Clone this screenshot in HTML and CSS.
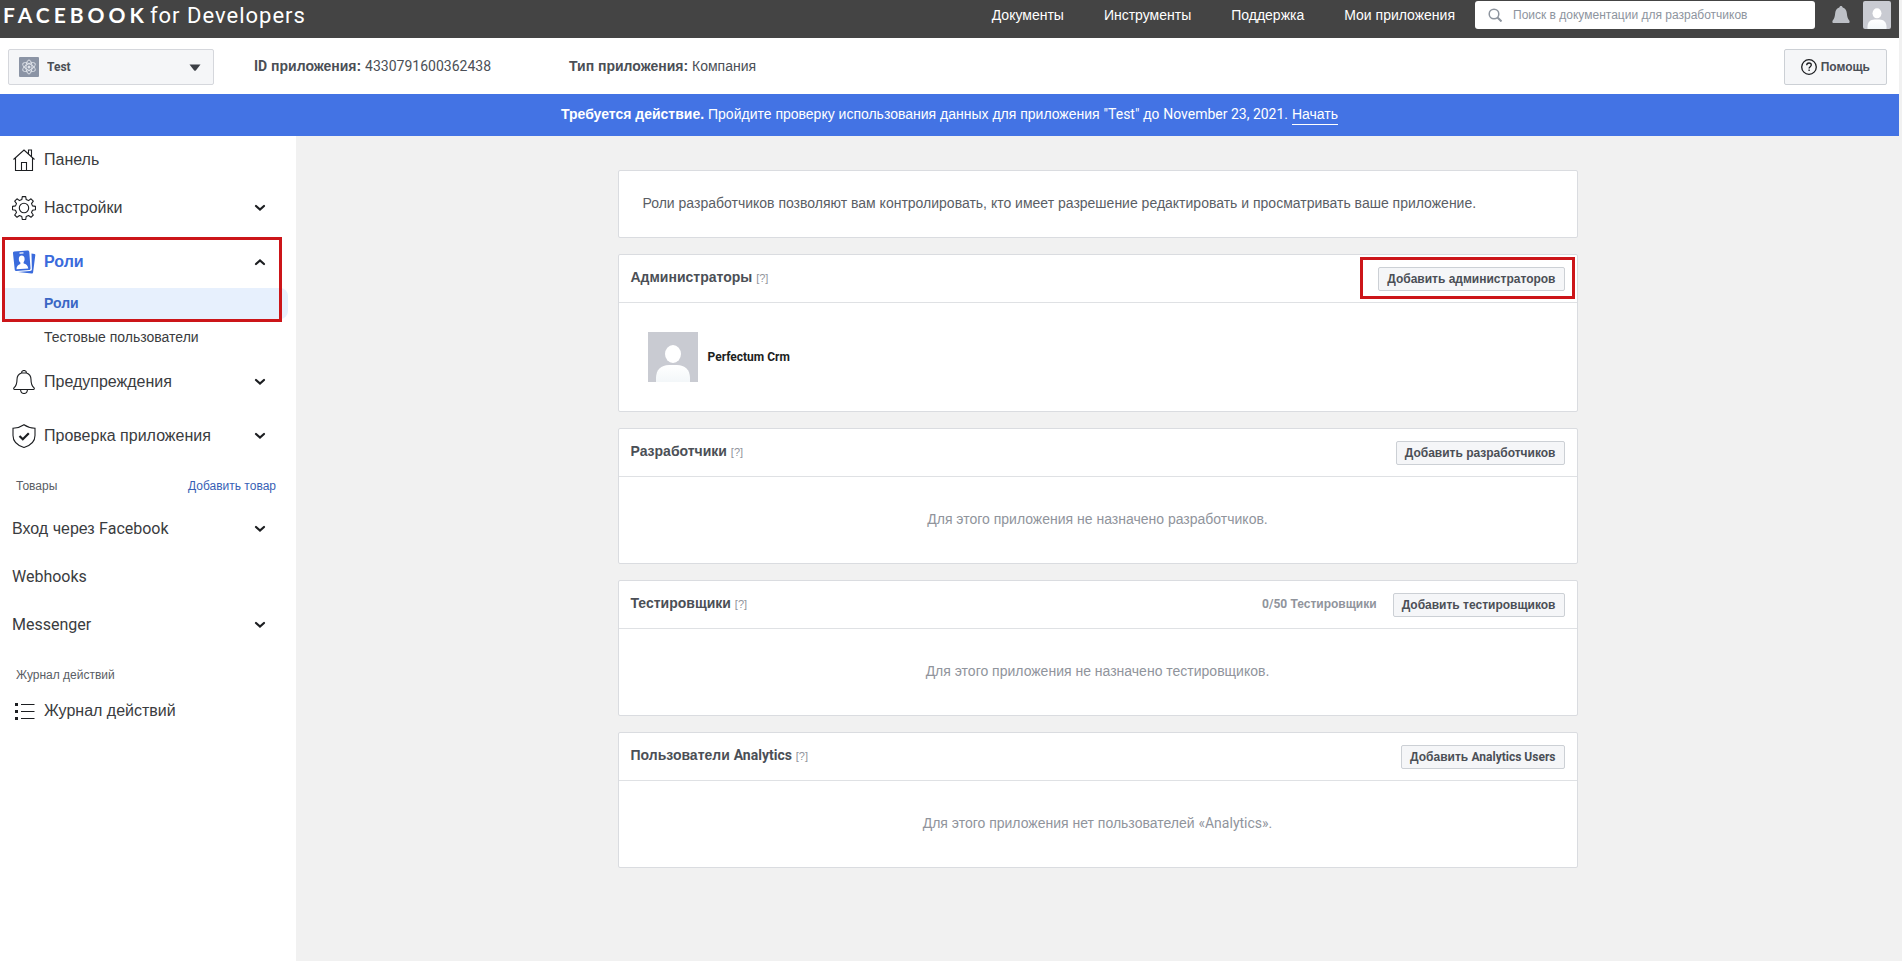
FILE: index.html
```html
<!DOCTYPE html>
<html lang="ru">
<head>
<meta charset="utf-8">
<title>Роли - Test - Facebook for Developers</title>
<link rel="stylesheet" href="styles.css">
</head>
<body>
<svg class="defs" aria-hidden="true">
  <symbol id="chevron" viewBox="0 0 12 8"><path d="M2 2l4 3.6L10 2" fill="none" stroke="#1c1e21" stroke-width="2.2" stroke-linecap="round"/></symbol>
  <symbol id="person" viewBox="0 0 50 50">
    <linearGradient id="shade" x1="0" y1="0" x2="0" y2="1"><stop offset="0" stop-color="#fff"/><stop offset="1" stop-color="#f3f7f9"/></linearGradient>
    <rect width="50" height="50" fill="#c9cbd2"/>
    <ellipse cx="25" cy="22" rx="8" ry="9" fill="#fff"/>
    <path d="M8 50v-4c0-8 5-13 13-13h8c8 0 13 5 13 13v4z" fill="url(#shade)"/>
  </symbol>
</svg>

<header class="topbar">
  <a class="brand" href="#"><span class="brand-name">FACEBOOK</span><span class="brand-suffix">for Developers</span></a>
  <nav class="topnav">
    <a href="#">Документы</a>
    <a href="#">Инструменты</a>
    <a href="#">Поддержка</a>
    <a href="#">Мои приложения</a>
  </nav>
  <label class="search">
    <svg width="14" height="14" viewBox="0 0 14 14"><circle cx="6" cy="6" r="4.8" fill="none" stroke="#8d949e" stroke-width="1.5"/><path d="M9.5 9.5l4 4" stroke="#8d949e" stroke-width="2"/></svg>
    <input type="search" aria-label="Поиск" placeholder="Поиск в документации для разработчиков">
  </label>
  <button class="icon-button" type="button" aria-label="Уведомления">
    <svg width="18" height="18" viewBox="0 0 18 18"><path d="M9 0c1 0 1.500.7 1.700 1.600C13.200 2.400 14.500 4.500 14.800 7c.3 3 .8 5.500 2.500 7.500.5.600.5 2.500-.5 2.500H1.200c-1 0-1-1.900-.5-2.500C2.400 12.500 2.900 10 3.200 7c.3-2.500 1.600-4.600 4.100-5.400C7.500.7 8 0 9 0z" fill="#bdc0c6"/></svg>
  </button>
  <button class="icon-button" type="button" aria-label="Профиль"><svg class="profile" width="28" height="28"><use href="#person"/></svg></button>
</header>

<div class="appbar">
  <div class="app-select">
    <svg class="app-icon" width="20" height="20" viewBox="0 0 20 20"><rect width="20" height="20" rx="1" fill="#8b94a5"/><g fill="none" stroke="#dfe3ea" stroke-width="1"><ellipse cx="10" cy="10" rx="3" ry="7"/><ellipse cx="10" cy="10" rx="3" ry="7" transform="rotate(60 10 10)"/><ellipse cx="10" cy="10" rx="3" ry="7" transform="rotate(120 10 10)"/></g><circle cx="10" cy="10" r="1.500" fill="#dfe3ea"/></svg>
    <select aria-label="Приложение"><option>Test</option></select>
    <svg class="app-caret" width="12" height="7" viewBox="0 0 12 7"><path d="M.5.5h11L7 6.200Q6 7.200 5 6.200z" fill="#3c3f45"/></svg>
  </div>
  <p class="app-id"><b><span class="latin">ID</span> приложения:</b> <span class="latin">4330791600362438</span></p>
  <p class="app-type"><b>Тип приложения:</b> Компания</p>
  <button class="help" type="button">
    <svg width="16" height="16" viewBox="0 0 16 16" fill="none" stroke="#1c1e21" stroke-width="1.300"><circle cx="8" cy="8" r="7.300"/><path d="M5.700 6.300c0-1.500 1-2.300 2.300-2.300s2.300.8 2.300 2c0 1.600-2.200 1.700-2.200 3.400"/><path d="M8.100 10.600v1.500"/></svg>
    Помощь
  </button>
</div>

<div class="notice"><b>Требуется действие.</b> Пройдите проверку использования данных для приложения <span class="latin">"Test"</span> до <span class="latin">November 23, 2021.</span> <a href="#">Начать</a></div>

<div class="layout">
  <nav class="sidebar">
    <a class="item" href="#">
      <svg class="icon" viewBox="0 0 24 24"><path d="M1.500 11.500L12 2l10.500 9.500M3.500 10v12.500h17V10M16.500 6V2h3v6.700M9.500 22.500v-8h5v8"/></svg>
      <span>Панель</span>
    </a>
    <button class="item" type="button">
      <svg class="icon" viewBox="0 0 24 24"><circle cx="12" cy="12" r="4.700"/><path d="M10.300.6h3.400l.5 3 2.300 1 2.500-1.800 2.300 2.300-1.800 2.500 1 2.300 3 .5v3.300l-3 .5-1 2.300 1.800 2.500-2.300 2.300-2.500-1.800-2.300 1-.5 3h-3.400l-.5-3-2.300-1L5 21.300 2.700 19l1.800-2.500-1-2.300-3-.5v-3.300l3-.5 1-2.300L2.700 5.100 5 2.800l2.500 1.800 2.300-1z" stroke-linejoin="round"/></svg>
      <span>Настройки</span>
      <svg class="chevron"><use href="#chevron"/></svg>
    </button>
    <div class="group">
      <div class="marked">
        <button class="item item-active" type="button">
          <svg class="icon-solid" viewBox="0 0 24 24"><path d="M19.500 3.500l3 .5c.6.100.9.600.8 1.200l-2.200 17c-.1.900-.7 1.300-1.500 1.200L6 22l12-.9c1.300-.1 2-.8 1.900-2z" fill="#3a6bdc"/><path d="M2.200 1.500L15.500.6c1-.1 1.700.5 1.800 1.500l1.200 16.200c.1 1-.5 1.700-1.500 1.800l-12.500.9c-1 .1-1.700-.5-1.800-1.500L1 3.300c-.1-1 .2-1.700 1.200-1.800z" fill="#3a6bdc"/><path d="M7.500 3.200l4-.3" stroke="#fff" stroke-width="1.200"/><g fill="#fff"><ellipse cx="9.700" cy="9" rx="2.900" ry="3.500"/><path d="M8.200 11h3.200l.3 2.600c2.400.4 4.200 2 4.600 4.900L4.500 19.300c0-3 1.600-4.800 3.900-5.400z"/></g></svg>
          <span>Роли</span>
          <svg class="chevron chevron-up"><use href="#chevron"/></svg>
        </button>
        <a class="subitem subitem-active" href="#">Роли</a>
      </div>
      <a class="subitem" href="#">Тестовые пользователи</a>
    </div>
    <button class="item item-spaced" type="button">
      <svg class="icon" viewBox="0 0 24 24"><path d="M9.500 3C9.500 1.500 10.500.5 12 .5s2.500 1 2.500 2.500C17.500 4 19 6.500 19 9.500c0 4 .8 6.500 3 8.300.6.600.3 1.700-.6 1.700H2.600c-.9 0-1.200-1.100-.6-1.700 2.200-1.800 3-4.300 3-8.300C5 6.500 6.500 4 9.500 3zM9.500 3h5M8.500 19.500c.2 2.300 1.500 4 3.500 4s3.300-1.700 3.500-4"/></svg>
      <span>Предупреждения</span>
      <svg class="chevron"><use href="#chevron"/></svg>
    </button>
    <button class="item" type="button">
      <svg class="icon" viewBox="0 0 24 24"><path d="M12 .7c3.300 2.300 6.800 3.300 11 3.600v7.200c0 6-4.500 10-11 12-6.500-2-11-6-11-12V4.300C5.200 4 8.700 3 12 .7z"/><path d="M7.500 12l3.300 3.300 6-6" stroke-width="2.200"/></svg>
      <span>Проверка приложения</span>
      <svg class="chevron"><use href="#chevron"/></svg>
    </button>
    <div class="section"><span>Товары</span><a href="#">Добавить товар</a></div>
    <button class="item" type="button"><span>Вход через <span class="latin">Facebook</span></span><svg class="chevron"><use href="#chevron"/></svg></button>
    <a class="item latin" href="#"><span>Webhooks</span></a>
    <button class="item latin" type="button"><span>Messenger</span><svg class="chevron"><use href="#chevron"/></svg></button>
    <div class="section section-tight"><span>Журнал действий</span></div>
    <a class="item" href="#">
      <svg class="icon" viewBox="0 0 24 24"><path d="M9 5.500h13.500M9 12.500h13.500M9 19.500h13.500"/><path d="M3 4h3v3H3zM3 11h3v3H3zM3 18h3v3H3z" fill="#1c1e21" stroke="none"/></svg>
      <span>Журнал действий</span>
    </a>
  </nav>

  <main class="main">
    <div class="cards">
      <section class="card intro">Роли разработчиков позволяют вам контролировать, кто имеет разрешение редактировать и просматривать ваше приложение.</section>

      <section class="card">
        <div class="card-head"><h2>Администраторы <a href="#">[?]</a></h2><span class="marked-button"><button class="add" type="button">Добавить администраторов</button></span></div>
        <div class="people"><svg width="50" height="50"><use href="#person"/></svg><b class="latin">Perfectum Crm</b></div>
      </section>

      <section class="card">
        <div class="card-head"><h2>Разработчики <a href="#">[?]</a></h2><button class="add" type="button">Добавить разработчиков</button></div>
        <p class="empty">Для этого приложения не назначено разработчиков.</p>
      </section>

      <section class="card">
        <div class="card-head"><h2>Тестировщики <a href="#">[?]</a></h2><span class="quota"><span class="latin">0/50</span> Тестировщики</span><button class="add" type="button">Добавить тестировщиков</button></div>
        <p class="empty">Для этого приложения не назначено тестировщиков.</p>
      </section>

      <section class="card">
        <div class="card-head"><h2>Пользователи <span class="latin">Analytics</span> <a href="#">[?]</a></h2><button class="add" type="button">Добавить <span class="latin">Analytics Users</span></button></div>
        <p class="empty">Для этого приложения нет пользователей <span class="latin">«Analytics».</span></p>
      </section>
    </div>
  </main>
</div>
</body>
</html>
```
FILE: styles.css
```css
* { box-sizing: border-box; }

body {
  margin: 0;
  padding-right: 3px;
  min-height: 100vh;
  display: flex;
  flex-direction: column;
  background: #f1f1f1;
  color: #4b4f56;
  font: 14px/18px "Liberation Sans", sans-serif;
}

a { color: inherit; text-decoration: none; }
button, input, select { font: inherit; color: inherit; }
button { padding: 0; border: 0; background: none; cursor: pointer; }
p, h2 { margin: 0; }
svg { display: block; flex: none; }
.defs { position: absolute; width: 0; height: 0; }
.latin { font-family: Roboto, sans-serif; }

/* Top bar */
.topbar {
  display: flex;
  align-items: center;
  height: 38px;
  padding: 0 8px 8px 3px;
  background: #444;
  color: #fff;
}
.brand { display: flex; align-items: baseline; gap: 2px; margin-right: auto; line-height: 24px; }
.brand-name { font-family: Lato, sans-serif; font-size: 21px; font-weight: 700; letter-spacing: 4px; }
.brand-suffix { font-family: Roboto, sans-serif; font-size: 22px; letter-spacing: 1px; }
.topnav { display: flex; gap: 40px; margin-right: 20px; }
.search {
  display: flex;
  align-items: center;
  gap: 11px;
  width: 340px;
  height: 28px;
  padding: 0 13px;
  border-radius: 3px;
  background: #fff;
}
.search input { flex: 1; min-width: 0; padding: 0; border: 0; outline: 0; background: none; color: #4b4f56; font-size: 12px; }
.search input::placeholder { color: #8d949e; opacity: 1; }
.icon-button { margin-left: 17px; }
.icon-button + .icon-button { margin-left: 13px; }
.profile { border-radius: 2px; }

/* Application bar */
.appbar {
  display: flex;
  align-items: center;
  height: 56px;
  padding: 2px 12px 0 8px;
  background: #fff;
}
.app-select { position: relative; width: 206px; margin-right: 40px; }
.app-select select {
  display: block;
  width: 100%;
  height: 36px;
  padding: 0 32px 0 38px;
  border: 1px solid #d5d7dc;
  border-radius: 2px;
  background: #f5f6f8;
  appearance: none;
  font-family: Roboto, sans-serif;
  font-size: 12px;
  font-weight: 700;
}
.app-icon { position: absolute; left: 11px; top: 8px; }
.app-caret { position: absolute; right: 13px; top: 15px; }
.app-id, .app-type { padding-bottom: 2px; }
.app-type { margin-left: 78px; }
.help {
  display: flex;
  align-items: center;
  gap: 4px;
  height: 36px;
  margin-left: auto;
  padding: 0 16px;
  border: 1px solid #ccd0d5;
  border-radius: 2px;
  background: #f5f6f8;
  font-size: 12px;
  font-weight: 700;
}

.notice {
  padding: 11px 16px 13px;
  background: #4373e4;
  color: #fff;
  text-align: center;
}
.notice a { border-bottom: 1px solid #fff; padding-bottom: 2px; }

/* Layout */
.layout { display: flex; flex: 1; }
.sidebar { width: 296px; flex: none; background: #fff; color: #3a3c40; }
.main { flex: 1; padding: 34px 24px 40px; }
.cards { display: grid; gap: 16px; max-width: 960px; margin: 0 auto; }

/* Sidebar */
.item {
  display: flex;
  align-items: center;
  gap: 8px;
  width: 100%;
  height: 48px;
  padding: 0 30px 0 12px;
  font-size: 16px;
  line-height: 20px;
  text-align: left;
}
.icon, .icon-solid { width: 24px; height: 24px; }
.icon { fill: none; stroke: #1c1e21; stroke-width: 1.1; }
.chevron { width: 12px; height: 8px; margin-left: auto; }
.chevron-up { transform: rotate(180deg); }
.group { margin: 6px 0 5px; }
.item-active { color: #3a6bdc; font-weight: 700; }
.item-spaced { margin-bottom: 6px; }
.subitem {
  display: block;
  margin: 2px 8px 3px 4px;
  padding: 6px 0 7px 40px;
  border-radius: 0 8px 8px 0;
}
.subitem-active { background: #e7f0fd; color: #3a66c4; font-weight: 700; }
.marked { position: relative; }
.marked::after {
  content: "";
  position: absolute;
  inset: -1px 14px -3px 2px;
  border: 3px solid #cc1519;
  pointer-events: none;
}
.section {
  display: flex;
  justify-content: space-between;
  padding: 17px 20px 10px 16px;
  color: #5a5e65;
  font-size: 12px;
}
.section a { color: #385fb5; }
.section-tight { padding-bottom: 3px; }

/* Cards */
.card { border: 1px solid #dadce0; border-radius: 2px; background: #fff; }
.intro { padding: 23px 24px 25px; color: #5a5e65; }
.card-head {
  display: flex;
  align-items: center;
  height: 48px;
  padding: 0 12px;
  border-bottom: 1px solid #dfe1e4;
}
.card-head h2 { margin-right: auto; padding-bottom: 2px; font-size: 14px; font-weight: 700; }
.card-head h2 a { color: #90949c; font-size: 11px; font-weight: 400; }
.add {
  height: 24px;
  padding: 0 8px;
  border: 1px solid #ccd0d5;
  border-radius: 2px;
  background: #f5f6f8;
  font-size: 12px;
  font-weight: 700;
}
.quota { margin-right: 16px; padding-bottom: 2px; color: #90949c; font-size: 12px; font-weight: 700; }
.marked-button { position: relative; }
.marked-button::after {
  content: "";
  position: absolute;
  inset: -10px -10px -8px -18px;
  border: 3px solid #cc1519;
  pointer-events: none;
}
.people { display: flex; align-items: center; gap: 10px; padding: 29px; color: #1c1e21; font-size: 12px; }
.empty { padding: 33px 16px 35px; color: #90949c; text-align: center; }
```
